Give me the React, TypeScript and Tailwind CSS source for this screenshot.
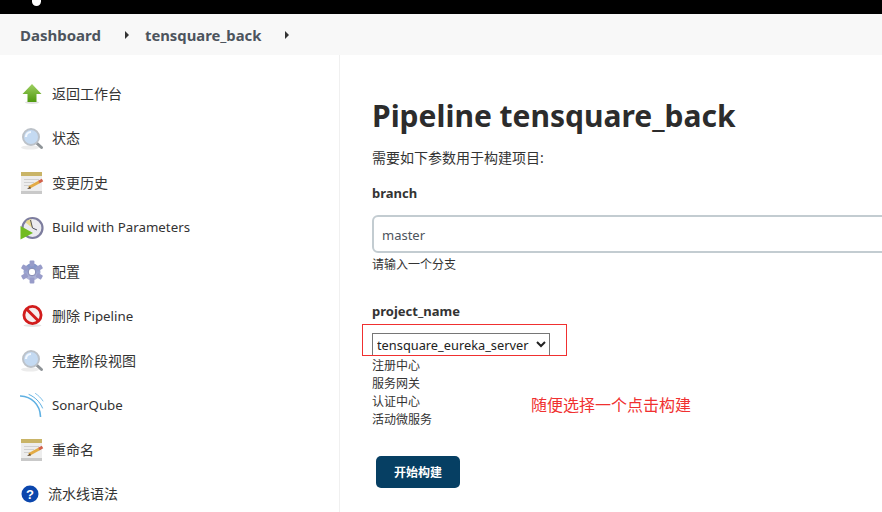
import type { ReactNode } from 'react'

const font = { fontFamily: '"Noto Sans", "Noto Sans CJK SC", sans-serif' }

function UpArrow() {
  return (
    <svg width="24" height="24" viewBox="0 0 24 24">
      <defs>
        <linearGradient id="up" x1="0" y1="0" x2="0" y2="1">
          <stop offset="0" stopColor="#9fd063" />
          <stop offset="1" stopColor="#4f9a0e" />
        </linearGradient>
      </defs>
      <ellipse cx="12" cy="20.5" rx="7" ry="1.5" fill="#e0e0e0" />
      <path d="M12 2 L21.5 12 H16.5 V20 H7.5 V12 H2.5 Z" fill="url(#up)" />
    </svg>
  )
}

function Magnifier() {
  return (
    <svg width="24" height="24" viewBox="0 0 24 24">
      <ellipse cx="10" cy="20.5" rx="9" ry="2" fill="#ececec" />
      <path d="M16 15.5 L21.5 20.5" stroke="#8f9498" strokeWidth="3" strokeLinecap="round" />
      <circle cx="11" cy="10" r="8" fill="#c4daf2" stroke="#bcc2c9" strokeWidth="2" />
      <path d="M6 10 A5 5 0 0 1 11 5" stroke="#f2f8ff" strokeWidth="2.2" fill="none" />
    </svg>
  )
}

function Notepad() {
  return (
    <svg width="24" height="24" viewBox="0 0 24 24">
      <rect x="1" y="1" width="21" height="22" rx="1" fill="#ededed" />
      <rect x="1" y="20" width="21" height="3" fill="#c9c9c9" />
      <rect x="1" y="1" width="21" height="4" fill="#c9b467" />
      <path d="M4 8.5 H19 M4 11.5 H14 M4 14.5 H10" stroke="#d0d0d0" strokeWidth="1.2" />
      <path d="M9 16.5 L20 10.5" stroke="#e3ab45" strokeWidth="3" />
      <path d="M19 11 L22.5 9" stroke="#d2624c" strokeWidth="3" />
      <path d="M10 15.6 L7 18 L11 17.6 Z" fill="#5a4630" />
    </svg>
  )
}

function ClockPlay() {
  return (
    <svg width="24" height="24" viewBox="0 0 24 24">
      <circle cx="12.5" cy="12" r="10" fill="#ebebf0" stroke="#7d7d9e" strokeWidth="2.2" />
      <path d="M12.5 12 L11 3 A9 9 0 0 0 5.5 6.5 Z" fill="#e9d98f" />
      <path d="M12.5 12 L10.5 4 M12.5 12 L17 14" stroke="#55555f" strokeWidth="1" />
      <path d="M0.5 10 L13 17 L0.5 23.5 Z" fill="#72bb22" />
    </svg>
  )
}

function Gear() {
  const teeth = [0, 60, 120, 180, 240, 300]
  return (
    <svg width="24" height="24" viewBox="0 0 24 24">
      <defs>
        <linearGradient id="gear" x1="0" y1="0" x2="0" y2="1">
          <stop offset="0" stopColor="#7d90c5" />
          <stop offset="1" stopColor="#b7b9da" />
        </linearGradient>
      </defs>
      <g fill="url(#gear)">
        <circle cx="12" cy="12" r="8.5" />
        {teeth.map((a) => (
          <rect key={a} x="9.6" y="0.5" width="4.8" height="6" rx="1" transform={`rotate(${a} 12 12)`} fill="#989cc9" />
        ))}
      </g>
      <circle cx="12" cy="12" r="3.8" fill="#fff" stroke="#8185b0" strokeWidth="1" />
    </svg>
  )
}

function NoEntry() {
  return (
    <svg width="24" height="24" viewBox="0 0 24 24">
      <ellipse cx="12.5" cy="21.5" rx="9" ry="1.5" fill="#e4e4e4" />
      <circle cx="12.5" cy="11" r="8.6" fill="#f6eeee" stroke="#d21c1c" strokeWidth="2.8" />
      <path d="M6.5 5 L18.5 17" stroke="#d21c1c" strokeWidth="3" />
    </svg>
  )
}

function Sonar() {
  return (
    <svg width="24" height="24" viewBox="0 0 24 24" fill="none" stroke="#5fb0e2" strokeLinecap="round">
      <path d="M0.5 3 C11 3.5 20 11 20.5 23.5" strokeWidth="1.6" />
      <path d="M9 1.5 C15 4 20 9 22.5 15" strokeWidth="1" />
      <path d="M15.5 0.5 C18.5 2.5 21 5 23 8" strokeWidth="0.8" />
    </svg>
  )
}

function Help() {
  return (
    <svg width="18" height="18" viewBox="0 0 18 18">
      <circle cx="9" cy="9" r="8.5" fill="#0b46ad" />
      <text x="9" y="13.5" textAnchor="middle" fontSize="13" fontWeight="700" fill="#fff" fontFamily="Liberation Sans, sans-serif">
        ?
      </text>
    </svg>
  )
}

const items: { icon: ReactNode; label: ReactNode; key: string; size: string }[] = [
  { key: 'back', icon: <UpArrow />, label: '返回工作台', size: 'text-[14px] pb-[2px]' },
  { key: 'status', icon: <Magnifier />, label: '状态', size: 'text-[14px] pb-[2px]' },
  { key: 'changes', icon: <Notepad />, label: '变更历史', size: 'text-[14px] pb-[2px]' },
  { key: 'build', icon: <ClockPlay />, label: 'Build with Parameters', size: 'text-[13.3px]' },
  { key: 'config', icon: <Gear />, label: '配置', size: 'text-[14px]' },
  {
    key: 'delete',
    icon: <NoEntry />,
    label: (
      <>
        <span className="text-[14px]">删除</span> Pipeline
      </>
    ),
    size: 'text-[13.3px]',
  },
  { key: 'stages', icon: <Magnifier />, label: '完整阶段视图', size: 'text-[14px]' },
  { key: 'sonar', icon: <Sonar />, label: 'SonarQube', size: 'text-[13.3px] pt-[2px]' },
  { key: 'rename', icon: <Notepad />, label: '重命名', size: 'text-[14px]' },
]

function Caret() {
  return <span className="w-0 h-0 border-y-[4px] border-y-transparent border-l-[4px] border-l-[#333]" />
}

export default function App() {
  return (
    <div className="relative w-[882px] h-[512px] overflow-hidden bg-white text-[#333]" style={font}>
      {/* Header */}
      <div className="h-[14px] bg-black overflow-hidden pl-[32px]">
        <div className="w-[9px] h-[6px] bg-white rounded-b-full" />
      </div>

      {/* Breadcrumb */}
      <div className="flex items-center h-[41px] bg-[#f8f8f8] pl-5 pt-[1px] text-[15px] font-bold text-[#4d545d]">
        <span className="w-[105px]">Dashboard</span>
        <Caret />
        <span className="ml-[16px] w-[140px] text-[14.8px]">tensquare_back</span>
        <Caret />
      </div>

      <div className="flex">
        {/* Side panel */}
        <div className="w-[340px] h-[457px] shrink-0 border-r border-[#f0f0f0] pt-[17px] pl-5">
          {items.map((item) => (
            <div key={item.key} className="flex items-center h-[44.45px] text-[#333]">
              <span className="w-8 flex">{item.icon}</span>
              <span className={item.size}>{item.label}</span>
            </div>
          ))}
          <div className="flex items-center h-[44.45px] text-[#333]">
            <span className="w-7 flex pl-[1px]">
              <Help />
            </span>
            <span className="text-[14px] pb-[2px]">流水线语法</span>
          </div>
        </div>

        {/* Main */}
        <div className="flex-1 pl-8 pt-[39px]">
          <h1 className="text-[30px] leading-[44px] font-bold text-[#2c2c2c] whitespace-nowrap">Pipeline tensquare_back</h1>
          <p className="mt-[10px] text-[14px] leading-[20px]">需要如下参数用于构建项目:</p>
          <div className="mt-[15px] text-[13px] leading-[20px] font-bold">branch</div>
          <div className="mt-[12px] w-[560px] h-[38px] flex items-center border-2 border-[#c3ccd1] rounded-md pl-2 pt-[3px] text-[13px] text-[#4d545d]">
            master
          </div>
          <div className="text-xs leading-[18px] mt-[3px]">请输入一个分支</div>
          <div className="mt-[27px] text-[13px] leading-[20px] font-bold">project_name</div>
          <div className="mt-[12px]">
            <select className="block w-[178px] h-[23px] border border-[#767676] text-[12.8px] text-[#222] bg-white">
              <option>tensquare_eureka_server</option>
            </select>
          </div>
          <div className="text-xs leading-[18px] mt-[1px]">
            <div>注册中心</div>
            <div>服务网关</div>
            <div>认证中心</div>
            <div>活动微服务</div>
          </div>
          <div className="mt-[27px] ml-1 w-[84px] h-8 pt-[1px] rounded-[5px] flex items-center justify-center bg-[#063f63] text-white text-xs font-bold">
            开始构建
          </div>
        </div>
      </div>

      {/* Annotations */}
      <div className="absolute left-[362px] top-[324px] w-[205px] h-[32px] border border-[#f03030]" />
      <div className="absolute left-[531px] top-[395px] text-base leading-[20px] text-[#f03030]">随便选择一个点击构建</div>
    </div>
  )
}
